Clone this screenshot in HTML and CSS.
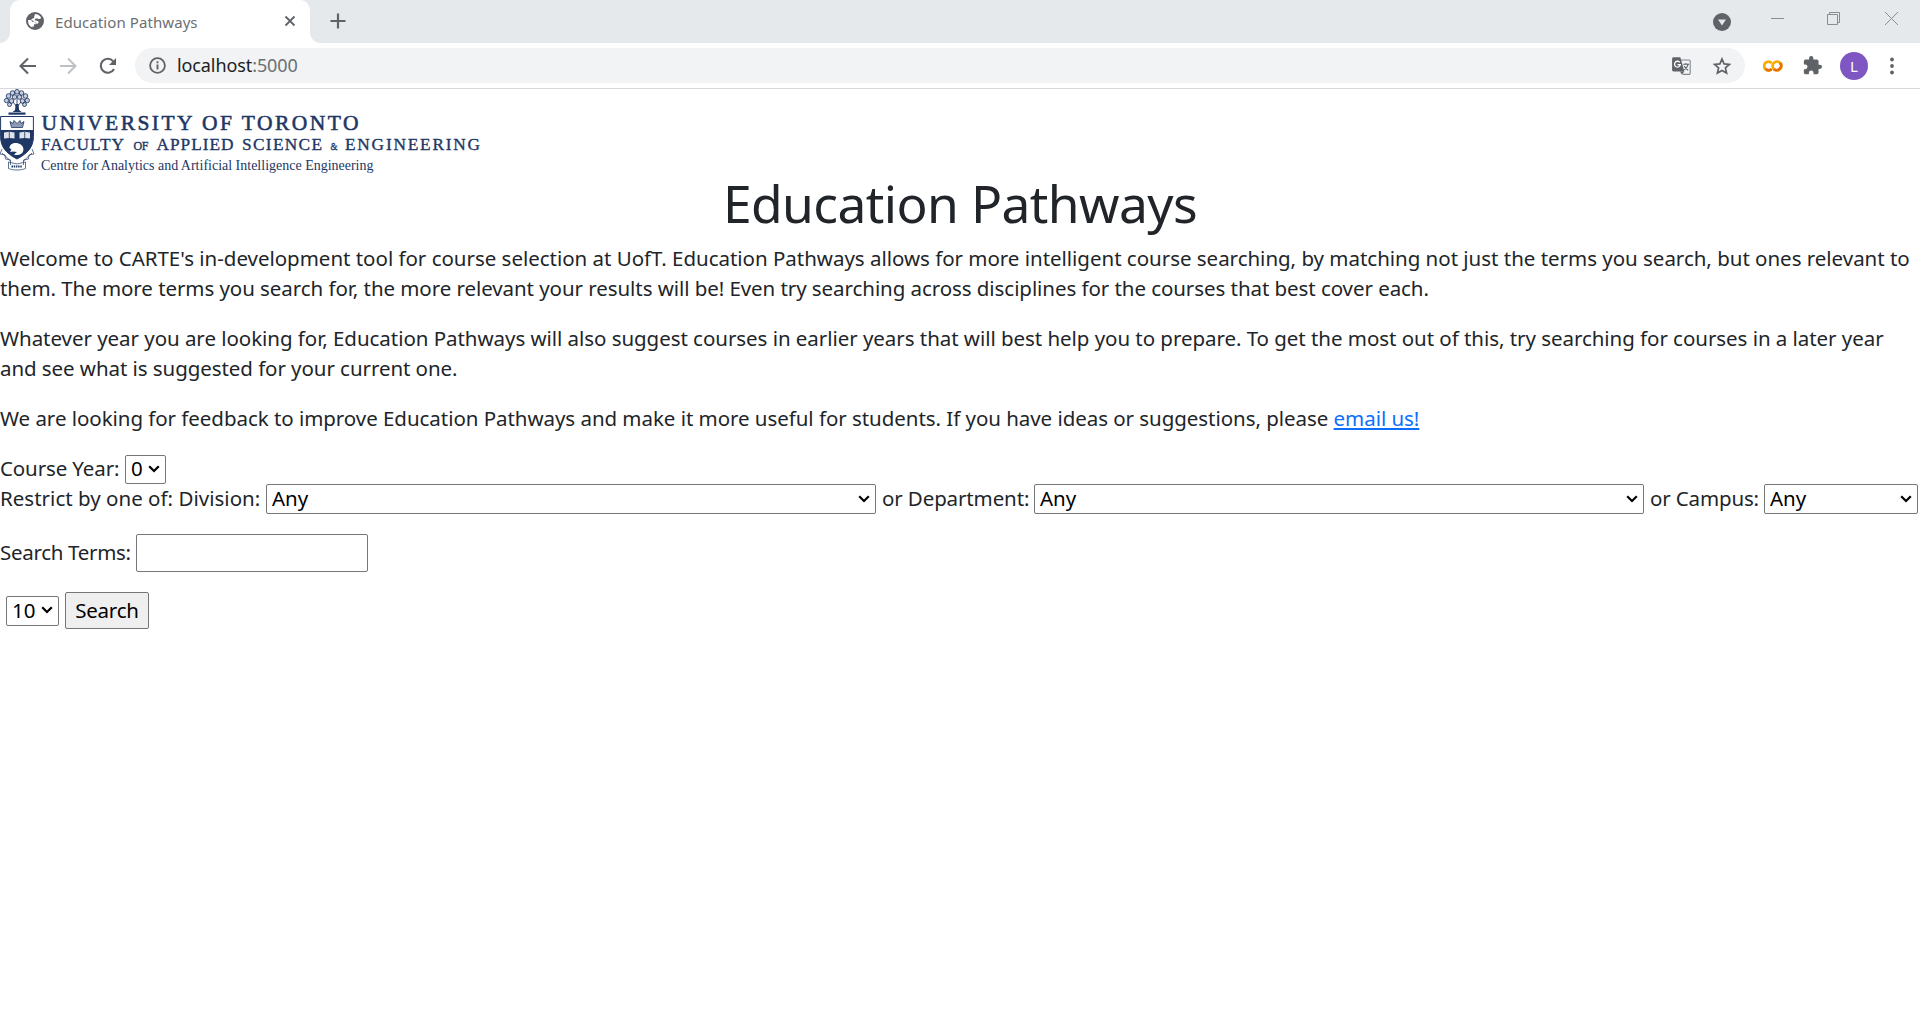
FILE: index.html
```
<!DOCTYPE html>
<html lang="en">
<head>
<meta charset="utf-8">
<title>Education Pathways</title>
<link rel="stylesheet" href="styles.css">
</head>
<body>
<header class="browser">
  <div class="tab-strip">
    <div class="tab">
      <svg class="favicon" viewBox="0 0 18 18" width="18" height="18"><circle cx="9" cy="9" r="8" fill="#fff" stroke="#5f6368" stroke-width="2"/><path d="M8 1.500C5 1.500 2 4 1.300 7.500l1 .6h2.900c1.600 0 2.600 1 2.600 2.200h1.900v1.900H8v2.200H6.300v1.800c4.500 1.600 9-.8 10.400-5.200.6-2 .4-4-.6-5.800l-1.500 1.200c-.8.8-1.800.9-2.500.4-.7-.6-1.500-.4-2.100-.2-.9.200-1.500 1-1.100 1.700.5.700 1.600.4 2.700.8.900.3 1.200 1.200.8 2-.5.900-1.600.9-2.300.3-.8-.8-1.400-1.500-2.800-1.500-1.300 0-2.200-.9-2-2.100.2-1 1.200-1.500 2.200-1.600.6 0 .9-.6.700-1.200-.2-.8.300-1.500 1.100-1.900z" fill="#5f6368"/></svg>
      <span class="tab-title">Education Pathways</span>
      <svg class="tab-close" viewBox="0 0 12 12" width="12" height="12"><path d="M1.500 1.500l9 9M10.500 1.500l-9 9" stroke="#5f6368" stroke-width="1.800"/></svg>
    </div>
    <svg class="new-tab" viewBox="0 0 16 16" width="16" height="16"><path d="M8 .5v15M.5 8h15" stroke="#5f6368" stroke-width="2.200"/></svg>
    <div class="window-controls">
      <svg viewBox="0 0 18 18" width="18" height="18"><circle cx="9" cy="9" r="9" fill="#5f6368"/><path d="M5 6.500h8L9 12.500z" fill="#e5e9ec"/></svg>
      <svg class="minimise" viewBox="0 0 13 13" width="13" height="13"><path d="M0 6.500h13" stroke="#8a8d8f"/></svg>
      <svg class="restore" viewBox="0 0 13 13" width="13" height="13"><path d="M.5 2.500h10v10H.5zM2.500 2.500v-2h10v10h-2" fill="none" stroke="#8a8d8f"/></svg>
      <svg class="close" viewBox="0 0 13 13" width="13" height="13"><path d="M0 0l13 13M13 0L0 13" stroke="#8a8d8f"/></svg>
    </div>
  </div>
  <div class="toolbar">
    <div class="nav">
      <svg viewBox="0 0 18 18" width="18" height="18"><path d="M17 9H2M9 1.500L1.500 9 9 16.500" fill="none" stroke="#5f6368" stroke-width="2.100"/></svg>
      <svg viewBox="0 0 18 18" width="18" height="18"><path d="M1 9h15M9 1.500L16.500 9 9 16.500" fill="none" stroke="#bdc1c6" stroke-width="2"/></svg>
      <svg viewBox="0 0 18 18" width="18" height="18"><path d="M15 12A7 7 0 1 1 14.200 4.300" fill="none" stroke="#5f6368" stroke-width="2.100"/><path d="M17 1v7h-7z" fill="#5f6368"/></svg>
    </div>
    <div class="address">
      <svg viewBox="0 0 17 17" width="17" height="17"><circle cx="8.500" cy="8.500" r="7.400" fill="none" stroke="#5f6368" stroke-width="1.800"/><path d="M8.500 7.500v5M8.500 4.300v1.900" stroke="#5f6368" stroke-width="1.900"/></svg>
      <span class="url">localhost<span class="port">:5000</span></span>
      <svg class="translate" viewBox="0 0 19 18" width="19" height="18"><path d="M8 3h9a1.200 1.200 0 0 1 1.200 1.200v12A1.200 1.200 0 0 1 17 17.400h-6.500" fill="none" stroke="#80868b" stroke-width="1.100"/><path d="M1.500.3h6.800l4.100 14.200H1.500A1.400 1.400 0 0 1 .1 13.100V1.700A1.400 1.400 0 0 1 1.500.3z" fill="#5f6368"/><path d="M8 14.500h4.400l-2.600 3z" fill="#5f6368"/><path d="M7.700 5.300A2.900 2.900 0 1 0 8.300 7.700H5.500" fill="none" stroke="#fff" stroke-width="1.300"/><path d="M11 7.300h6M14 6v1.300M16 7.500c-.4 2.200-1.800 4-3.700 5.300M12.300 9c.8 1.800 2 3.200 3.900 4.300" fill="none" stroke="#5f6368" stroke-width="1.100"/></svg>
      <svg viewBox="0 0 18 18" width="18" height="18"><path d="M9 2l2.100 4.900 5.300.5-4 3.500 1.200 5.200L9 13.400l-4.600 2.700 1.200-5.200-4-3.500 5.300-.5z" fill="none" stroke="#5f6368" stroke-width="1.700"/></svg>
    </div>
    <div class="extensions">
      <svg viewBox="0 0 20 12" width="20" height="12"><path d="M8.600 2.900A4.400 4.400 0 1 0 8.600 9.100" fill="none" stroke="#f9ab00" stroke-width="2.800"/><circle cx="14" cy="6" r="4.400" fill="none" stroke="#f9ab00" stroke-width="2.800"/><path d="M2.600 9.100A4.400 4.400 0 0 0 8.600 9.100M17.100 2.900a4.400 4.400 0 0 1-6.200 6.200" fill="none" stroke="#e8710a" stroke-width="2.800"/></svg>
      <svg class="puzzle" viewBox="1 1 22 22" width="19" height="19"><path d="M20.500 11H19V7c0-1.100-.9-2-2-2h-4V3.500a2.500 2.500 0 0 0-5 0V5H4c-1.100 0-1.990.9-1.990 2v3.800H3.500a2.700 2.700 0 0 1 0 5.400H2V20c0 1.100.9 2 2 2h3.800v-1.500a2.700 2.700 0 0 1 5.400 0V22H17c1.100 0 2-.9 2-2v-4h1.500a2.500 2.500 0 0 0 0-5z" fill="#5f6368"/></svg>
      <span class="avatar">L</span>
      <svg class="menu" viewBox="0 0 4 18" width="4" height="18"><circle cx="2" cy="2.500" r="1.900" fill="#5f6368"/><circle cx="2" cy="9" r="1.900" fill="#5f6368"/><circle cx="2" cy="15.500" r="1.900" fill="#5f6368"/></svg>
    </div>
  </div>
</header>
<main>
  <svg class="logo" viewBox="0 0 482 86" width="482" height="86">
    <g fill="#1e3765" stroke="none">
      <g fill="#1e3765" fill-opacity=".25" stroke="#1e3765" stroke-opacity=".85" stroke-width="1">
        <circle cx="17" cy="2.800" r="2.300"/><circle cx="12.500" cy="4" r="2.300"/><circle cx="21.500" cy="4" r="2.300"/><circle cx="8.500" cy="7" r="2.300"/><circle cx="25.500" cy="7" r="2.300"/><circle cx="14.500" cy="8" r="2.300"/><circle cx="19.500" cy="8" r="2.300"/><circle cx="6.500" cy="11.500" r="2.200"/><circle cx="27.300" cy="11.500" r="2.200"/><circle cx="11.500" cy="12" r="2.300"/><circle cx="22.500" cy="12" r="2.300"/><circle cx="9.500" cy="15.500" r="2"/><circle cx="24.500" cy="15.500" r="2"/><path d="M13 13l4 5 4-5M17 10v12" fill="none"/>
      </g>
      <path d="M15.500 15h3l.6 6 2.500 2h-9l2.500-2z"/><rect x="8.500" y="23.500" width="17" height="2.200"/>
      <path d="M.6 27.500h32.800v20c0 10-5 16.500-16.400 22.500C5.600 64 .6 57.500.6 47.500z" fill="#fff" stroke="#1e3765"/>
      <path d="M.6 41h32.800v6.500c0 10-5 16.500-16.400 22.500C5.600 64 .6 57.500.6 47.500z"/>
      <path d="M11.500 38.500l-1.500-6 3 2 1-3 3 3 3-3 1 3 3-2-1.500 6z" fill="#1e3765" fill-opacity=".5" stroke="#1e3765" stroke-width=".8"/>
      <path d="M4 43.500l5.500-.7 5 .7v6l-5-.5-5.500.5zM19.500 43.500l5-.7 5.500.7v6l-5.500-.5-5 .5z" fill="#dfe3ea"/><path d="M9.300 43v6M24.700 43v6" stroke="#1e3765" stroke-width=".8"/>
      <path d="M9.500 59c0-4 5-6 9-4.500 4 1 6 5 4.500 8-1 3-5 4.500-9 3l3-2.500-4-.5-3 .5 1.500-2.500z" fill="#fff"/>
      <g fill="none" stroke="#1e3765" stroke-opacity=".7" stroke-width="1">
        <path d="M2 60l-2 5 5 1 .5 4 5 1v5M32 60l2 5-5 1-.5 4-5 1v5M2 64l8 7.500M32 64l-8 7.500M8.500 79.500c5 2 12 2 17 0V73l-8.500 2-8.500-2z"/>
      </g>
      <path d="M11.500 77.500h11" stroke="#1e3765" stroke-width="2.200" stroke-dasharray="1.500 .7"/>
      <g class="logo-text">
        <text x="41.500" y="41" font-size="21.500" textLength="317" stroke="#1e3765" stroke-width=".55">UNIVERSITY OF TORONTO</text>
        <text y="61" font-size="17.300" stroke="#1e3765" stroke-width=".35"><tspan x="41" textLength="83">FACULTY</tspan><tspan x="133.500" font-size="12" textLength="15">OF</tspan><tspan x="156.500" textLength="77">APPLIED</tspan><tspan x="242" textLength="80">SCIENCE</tspan><tspan x="330.500" font-size="11" textLength="7" lengthAdjust="spacingAndGlyphs">&amp;</tspan><tspan x="345" textLength="135">ENGINEERING</tspan></text>
        <text x="41" y="81" font-size="15" textLength="332.500" lengthAdjust="spacingAndGlyphs">Centre for Analytics and Artificial Intelligence Engineering</text>
      </g>
    </g>
  </svg>
  <h1>Education Pathways</h1>
  <p><span class="wide">Welcome to CARTE's in-development tool for course selection at UofT. Education Pathways allows for more intelligent course searching, by matching not just the terms you search, but ones relevant to</span><br><span class="tight">them. The more terms you search for, the more relevant your results will be! Even try searching across disciplines for the courses that best cover each.</span></p>
  <p>Whatever year you are looking for, Education Pathways will also suggest courses in earlier years that will best help you to prepare. To get the most out of this, try searching for courses in a later year<br><span class="tight">and see what is suggested for your current one.</span></p>
  <p>We are looking for feedback to improve Education Pathways and make it more useful for students. If you have ideas or suggestions, please <a href="#">email us!</a></p>
  <form>
    <div class="row">
      <label class="l-year">Course Year:</label>
      <span class="select s-year">0<svg viewBox="0 0 12 8" width="12" height="8"><path d="M1.200 1.200L6 6l4.800-4.800"/></svg></span>
    </div>
    <div class="row">
      <label class="l-division">Restrict by one of: Division:</label>
      <span class="select s-long">Any<svg viewBox="0 0 12 8" width="12" height="8"><path d="M1.200 1.200L6 6l4.800-4.800"/></svg></span>
      <label class="l-department">or Department:</label>
      <span class="select s-long">Any<svg viewBox="0 0 12 8" width="12" height="8"><path d="M1.200 1.200L6 6l4.800-4.800"/></svg></span>
      <label class="l-campus">or Campus:</label>
      <span class="select s-campus">Any<svg viewBox="0 0 12 8" width="12" height="8"><path d="M1.200 1.200L6 6l4.800-4.800"/></svg></span>
    </div>
    <div class="row terms-row">
      <label class="l-terms">Search Terms:</label>
      <input class="terms" type="text">
    </div>
    <div class="row submit-row">
      <span class="select s-count">10<svg viewBox="0 0 12 8" width="12" height="8"><path d="M1.200 1.200L6 6l4.800-4.800"/></svg></span>
      <button class="search" type="button">Search</button>
    </div>
  </form>
</main>
</body>
</html>
```
FILE: styles.css
```
* { box-sizing: border-box; }
body {
  margin: 0;
  background: #fff;
  color: #212529;
  font: 20.5px/30px "Noto Sans", "Open Sans", sans-serif;
  letter-spacing: -0.045px;
  overflow: hidden;
}
svg { display: block; flex: none; }

/* Browser frame */
.browser { height: 89px; border-bottom: 1px solid #d6d8db; letter-spacing: 0; }
.tab-strip { display: flex; height: 43px; background: #e5e9ec; padding-left: 10px; }
.tab {
  position: relative;
  display: flex;
  align-items: center;
  width: 300px;
  padding: 0 14px 0 16px;
  background: #fff;
  border-radius: 10px 10px 0 0;
}
.tab::before, .tab::after {
  content: "";
  position: absolute;
  bottom: 0;
  width: 10px;
  height: 10px;
}
.tab::before { left: -10px; background: radial-gradient(circle at 0 0, transparent 9.5px, #fff 10px); }
.tab::after { right: -10px; background: radial-gradient(circle at 100% 0, transparent 9.5px, #fff 10px); }
.favicon, .tab-close { margin-top: -1px; }
.tab-title { margin: 0 auto 0 11px; font-size: 15px; letter-spacing: 0.08px; line-height: 20px; color: #6b6f73; }
.new-tab { margin: 13px 0 0 20px; }
.window-controls { display: flex; align-items: flex-start; margin-left: auto; padding: 13px 22px 0 0; }
.minimise { margin: -1px 0 0 40px; }
.restore { margin: -1px 0 0 43px; }
.close { margin: -1px 0 0 45px; }
.toolbar { display: flex; align-items: center; height: 45px; padding: 0 26px 0 19px; }
.nav { display: flex; gap: 22px; width: 116px; }
.address {
  display: flex;
  align-items: center;
  width: 1610px;
  height: 35px;
  padding: 0 14px;
  border-radius: 18px;
  background: #f1f3f4;
}
.url { margin: -1px auto 0 11px; font-size: 18px; letter-spacing: -0.1px; color: #202124; }
.port { color: #6b6f73; }
.translate { margin-right: 22px; }
.extensions { display: flex; align-items: center; margin-left: 18px; flex: 1; }
.puzzle { margin-left: 20px; }
.avatar {
  width: 28px;
  height: 28px;
  margin-left: 18px;
  border-radius: 50%;
  background: #7e57c2;
  color: #fff;
  font-size: 15px;
  line-height: 28px;
  text-align: center;
}
.menu { margin-left: auto; }

/* Page */
.logo-text { font-family: "Liberation Serif", serif; letter-spacing: 0; }
h1 {
  margin: -2px 0 10px;
  font-size: 51.5px;
  font-weight: 400;
  line-height: 60px;
  letter-spacing: -0.6px;
  text-align: center;
}
p { margin: 0 0 20px; white-space: nowrap; }
.wide { letter-spacing: -0.02px; }
.tight { letter-spacing: -0.065px; }
a { color: #0d6efd; }
form { margin-top: 21px; }
label { padding-bottom: 2px; }
.row { display: flex; align-items: center; height: 30px; white-space: nowrap; }
.select {
  display: flex;
  align-items: center;
  justify-content: space-between;
  height: 30px;
  padding: 0 5px 1px 5px;
  border: 1px solid #767676;
  border-radius: 2px;
  background: #fff;
  color: #000;
  line-height: 27px;
}
.select path { fill: none; stroke: #000; stroke-width: 2.2; }
.l-year { width: 125px; letter-spacing: -0.12px; }
.s-year { width: 41px; height: 29px; }
.l-division { width: 266px; letter-spacing: 0.02px; }
.s-long { width: 610px; }
.l-department { width: 158px; padding-left: 6px; letter-spacing: -0.12px; }
.l-campus { width: 120px; padding-left: 6px; letter-spacing: -0.15px; }
.s-campus { width: 154px; }
.terms-row { height: 38px; margin-top: 20px; }
.l-terms { width: 136px; letter-spacing: -0.3px; }
.terms { width: 232px; height: 38px; border: 1px solid #767676; border-radius: 2px; }
.submit-row { height: 37px; margin-top: 20px; padding-left: 6px; gap: 6px; }
.s-count { width: 53px; }
.search {
  width: 84px;
  height: 37px;
  padding: 0 0 2px;
  border: 1px solid #767676;
  border-radius: 2px;
  background: #efefef;
  color: #000;
  font: inherit;
  letter-spacing: -0.2px;
}
```
